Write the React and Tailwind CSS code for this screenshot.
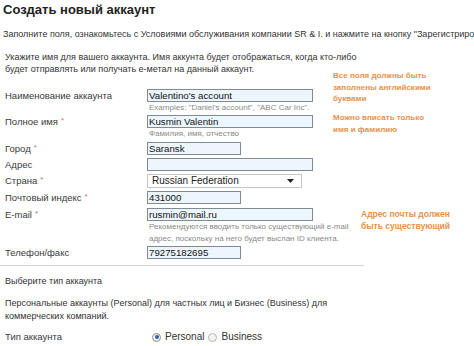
export default function App() {
  const F = "font-['Liberation_Sans',Arial,sans-serif]";

  const Label = ({ children, req }) => (
    <div className="w-[147px] shrink-0 pl-[5px] text-[9.5px] leading-none text-[#3a3a3a]">
      {children}
      {req && <span className="ml-[3px] text-[8px] text-[#e06a6a] align-top">*</span>}
    </div>
  );

  const Field = ({ value, w }) => (
    <div
      className={`${w} h-[13px] box-border border border-[#7f8c98] bg-[#eef6fd] flex items-center pl-[1px] text-[9.7px] leading-none text-[#111] whitespace-nowrap overflow-hidden`}
    >
      {value}
    </div>
  );

  const Hint = ({ children, cls = "" }) => (
    <div className={`pl-[149px] text-[8px] leading-[12px] text-[#8a8a8a] whitespace-nowrap ${cls}`}>
      {children}
    </div>
  );

  return (
    <div className={`relative w-[474px] h-[346px] overflow-hidden bg-white ${F}`}>
      {/* title */}
      <div className="pl-[3px] pt-[1px] h-[19px] text-[13px] leading-[18px] font-bold text-[#222] whitespace-nowrap">
        Создать новый аккаунт
      </div>
      <div className="mt-[9px] pl-[3px] text-[9px] leading-[12px] text-[#333] whitespace-nowrap">
        Заполните поля, ознакомьтесь с Условиями обслуживания компании SR &amp; I. и нажмите на кнопку "Зарегистрировать"
      </div>
      <div className="mt-[11px] pl-[5px] text-[9px] leading-[12px] text-[#333] whitespace-nowrap">
        Укажите имя для вашего аккаунта. Имя аккунта будет отображаться, когда кто-либо
        <br />
        будет отправлять или получать е-метал на данный аккаунт.
      </div>

      {/* form */}
      <div className="mt-[14px] flex flex-col">
        <div className="flex items-center h-[13px]">
          <Label>Наименование аккаунта</Label>
          <Field value="Valentino's account" w="w-[166px]" />
        </div>
        <Hint>Examples: "Daniel's account", "ABC Car Inc".</Hint>

        <div className="mt-[1px] flex items-center h-[13px]">
          <Label req>Полное имя</Label>
          <Field value="Kusmin Valentin" w="w-[166px]" />
        </div>
        <Hint>Фамилия, имя, отчество</Hint>

        <div className="mt-[2px] flex items-center h-[13px]">
          <Label req>Город</Label>
          <Field value="Saransk" w="w-[94px]" />
        </div>

        <div className="mt-[3px] flex items-center h-[13px]">
          <Label>Адрес</Label>
          <Field value="" w="w-[166px]" />
        </div>

        <div className="mt-[3px] flex items-center h-[14px]">
          <Label req>Страна</Label>
          <div className="w-[155px] h-[14px] box-border border border-[#c4c4c4] bg-white flex items-center justify-between pl-[4px] pr-[7px] text-[10px] leading-none text-[#222]">
            <span>Russian Federation</span>
            <svg width="7" height="4" viewBox="0 0 7 4">
              <path d="M0 0 H7 L3.5 4 Z" fill="#222" />
            </svg>
          </div>
        </div>

        <div className="mt-[3px] flex items-center h-[13px]">
          <Label req>Почтовый индекс</Label>
          <Field value="431000" w="w-[94px]" />
        </div>

        <div className="mt-[4px] flex items-center h-[13px]">
          <Label req>E-mail</Label>
          <Field value="rusmin@mail.ru" w="w-[166px]" />
        </div>
        <Hint>Рекомендуются вводить только существующий e-mail</Hint>
        <Hint>адрес, поскольку на него будет выслан ID клиента.</Hint>

        <div className="mt-[1px] flex items-center h-[13px]">
          <Label>Телефон/факс</Label>
          <Field value="79275182695" w="w-[94px]" />
        </div>

        <div className="mt-[6px] w-[364px] h-[1px] bg-[#d2d2d2]" />

        <div className="mt-[9px] pl-[5px] text-[9px] leading-[12px] text-[#333] whitespace-nowrap">
          Выберите тип аккаунта
        </div>
        <div className="mt-[10px] pl-[5px] text-[9px] leading-[13px] text-[#333] whitespace-nowrap">
          Персональные аккаунты (Personal) для частных лиц и Бизнес (Business) для
          <br />
          коммерческих компаний.
        </div>

        <div className="mt-[8px] flex items-center h-[12px]">
          <Label>Тип аккаунта</Label>
          <div className="flex items-center pl-[5px] text-[10px] leading-none text-[#333]">
            <span className="w-[9px] h-[9px] rounded-full border border-[#8d8d8d] bg-[#f2f2f2] flex items-center justify-center">
              <span className="w-[4px] h-[4px] rounded-full bg-[#2f5fa8]" />
            </span>
            <span className="ml-[4px]">Personal</span>
            <span className="ml-[4px] w-[9px] h-[9px] rounded-full border border-[#b4b4b4] bg-[#f4f4f4]" />
            <span className="ml-[4px]">Business</span>
          </div>
        </div>
      </div>

      {/* annotations */}
      <div className="absolute left-[333px] top-[70px] text-[8px] leading-[11.5px] font-bold text-[#e8914a] whitespace-nowrap">
        Все поля должны быть
        <br />
        заполнены английскими
        <br />
        буквами
      </div>
      <div className="absolute left-[333px] top-[112px] text-[8px] leading-[11.5px] font-bold text-[#e8914a] whitespace-nowrap">
        Можно вписать только
        <br />
        имя и фамилию
      </div>
      <div className="absolute left-[361px] top-[208px] text-[8.5px] leading-[12px] font-bold text-[#e8914a] whitespace-nowrap">
        Адрес почты должен
        <br />
        быть существующий
      </div>
    </div>
  );
}
